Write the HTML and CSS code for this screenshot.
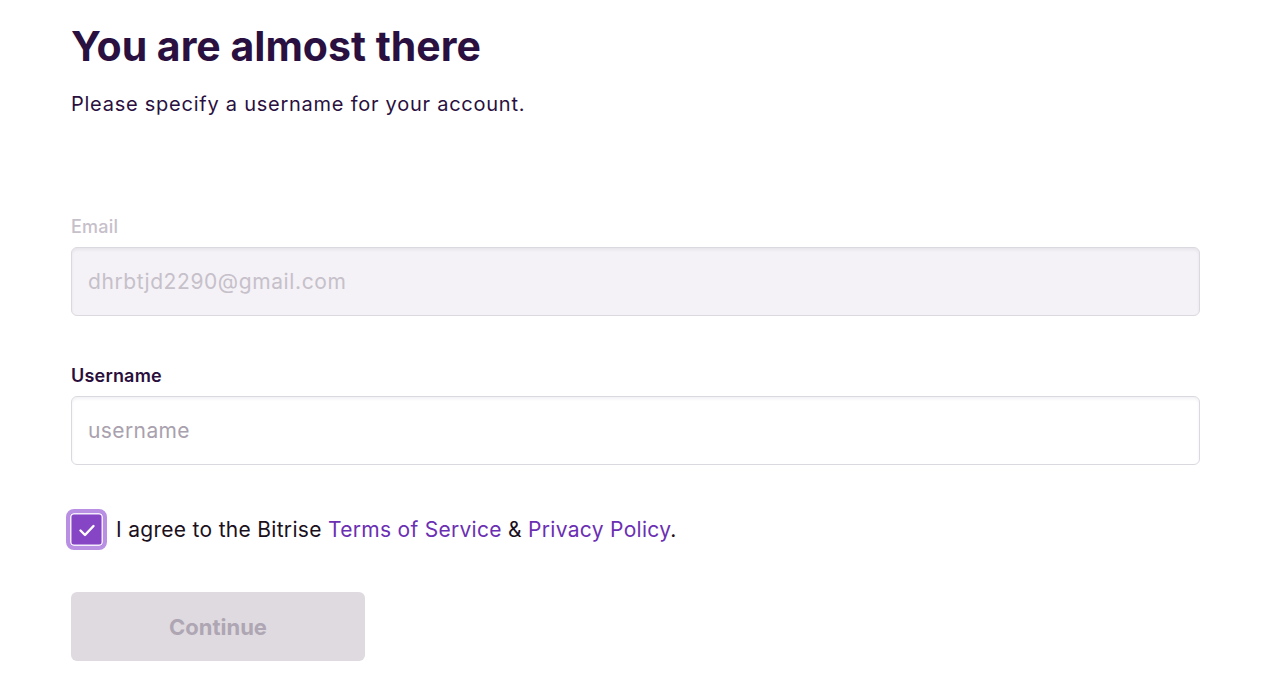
FILE: index.html
```html
<!DOCTYPE html>
<html lang="en">
<head>
    <meta charset="UTF-8">
    <meta name="viewport" content="width=device-width, initial-scale=1.0">
    <title>You are almost there</title>
    <link rel="stylesheet" href="styles.css">
</head>
<body>
    <div class="container">
        <h1>You are almost there</h1>
        <p class="subtitle">Please specify a username for your account.</p>

        <form class="signup-form">
            <div class="field field-disabled">
                <label for="email">Email</label>
                <input type="email" id="email" value="dhrbtjd2290@gmail.com" disabled>
            </div>

            <div class="field">
                <label for="username">Username</label>
                <input type="text" id="username" placeholder="username">
            </div>

            <label class="agree">
                <span class="checkbox">
                    <svg width="22" height="22" viewBox="0 0 22 22" fill="none">
                        <path d="M4.5 11.5l4.5 4.5 8.5-9" stroke="#fff" stroke-width="2.4" stroke-linecap="round" stroke-linejoin="round"/>
                    </svg>
                </span>
                <span>I agree to the Bitrise <a href="#">Terms of Service</a> &amp; <a href="#">Privacy Policy</a>.</span>
            </label>

            <button type="button" class="continue-button" disabled>Continue</button>
        </form>
    </div>
</body>
</html>
```

FILE: styles.css
```css
body {
    font-family: Inter, "Noto Sans", sans-serif;
    margin: 0;
    background-color: #fff;
    color: #2a0f3d;
}
.container {
    padding: 22px 80px 0 71px;
}
h1 {
    font-size: 41px;
    font-weight: 700;
    line-height: 48px;
    margin: 0;
    color: #2a1040;
}
.subtitle {
    font-size: 20px;
    letter-spacing: 0.75px;
    line-height: 28px;
    margin: 20px 0 0;
    color: #2a1040;
}
.signup-form {
    margin-top: 97px;
}
.field {
    margin-bottom: 48px;
}
.field label {
    display: block;
    font-size: 18px;
    font-weight: 600;
    letter-spacing: 0.2px;
    line-height: 24px;
    margin-bottom: 8px;
}
.field input {
    display: block;
    box-sizing: border-box;
    width: 100%;
    height: 69px;
    padding: 0 16px;
    font-family: inherit;
    font-size: 21px;
    letter-spacing: 0.4px;
    color: #2a1040;
    background-color: #fff;
    border: 1px solid #dcd8df;
    border-radius: 6px;
    box-shadow: inset 0 2px 3px rgba(40, 20, 60, 0.06);
    outline: none;
}
.field input::placeholder {
    color: #a9a1ae;
}
.field-disabled label {
    color: #c6c0ca;
    font-weight: 500;
}
.field-disabled input {
    background-color: #f4f2f6;
    color: #c6c0ca;
    letter-spacing: 0.6px;
}
.agree {
    display: flex;
    align-items: center;
    gap: 9px;
    margin-top: -4px;
    font-size: 21px;
    letter-spacing: 0.3px;
    color: #1b1020;
}
.checkbox {
    display: flex;
    align-items: center;
    justify-content: center;
    box-sizing: border-box;
    width: 41px;
    height: 41px;
    margin-left: -5px;
    border: 4px solid #b88fe3;
    border-radius: 8px;
    background-color: #8545c5;
    box-shadow: inset 0 0 0 1.5px #f3ecfb;
}
.agree a {
    color: #6b2fb3;
    text-decoration: none;
}
.continue-button {
    display: block;
    width: 294px;
    height: 69px;
    margin-top: 42px;
    font-family: inherit;
    font-size: 22px;
    font-weight: 700;
    color: #aea6b3;
    background-color: #dfdae0;
    border: none;
    border-radius: 6px;
}
```
